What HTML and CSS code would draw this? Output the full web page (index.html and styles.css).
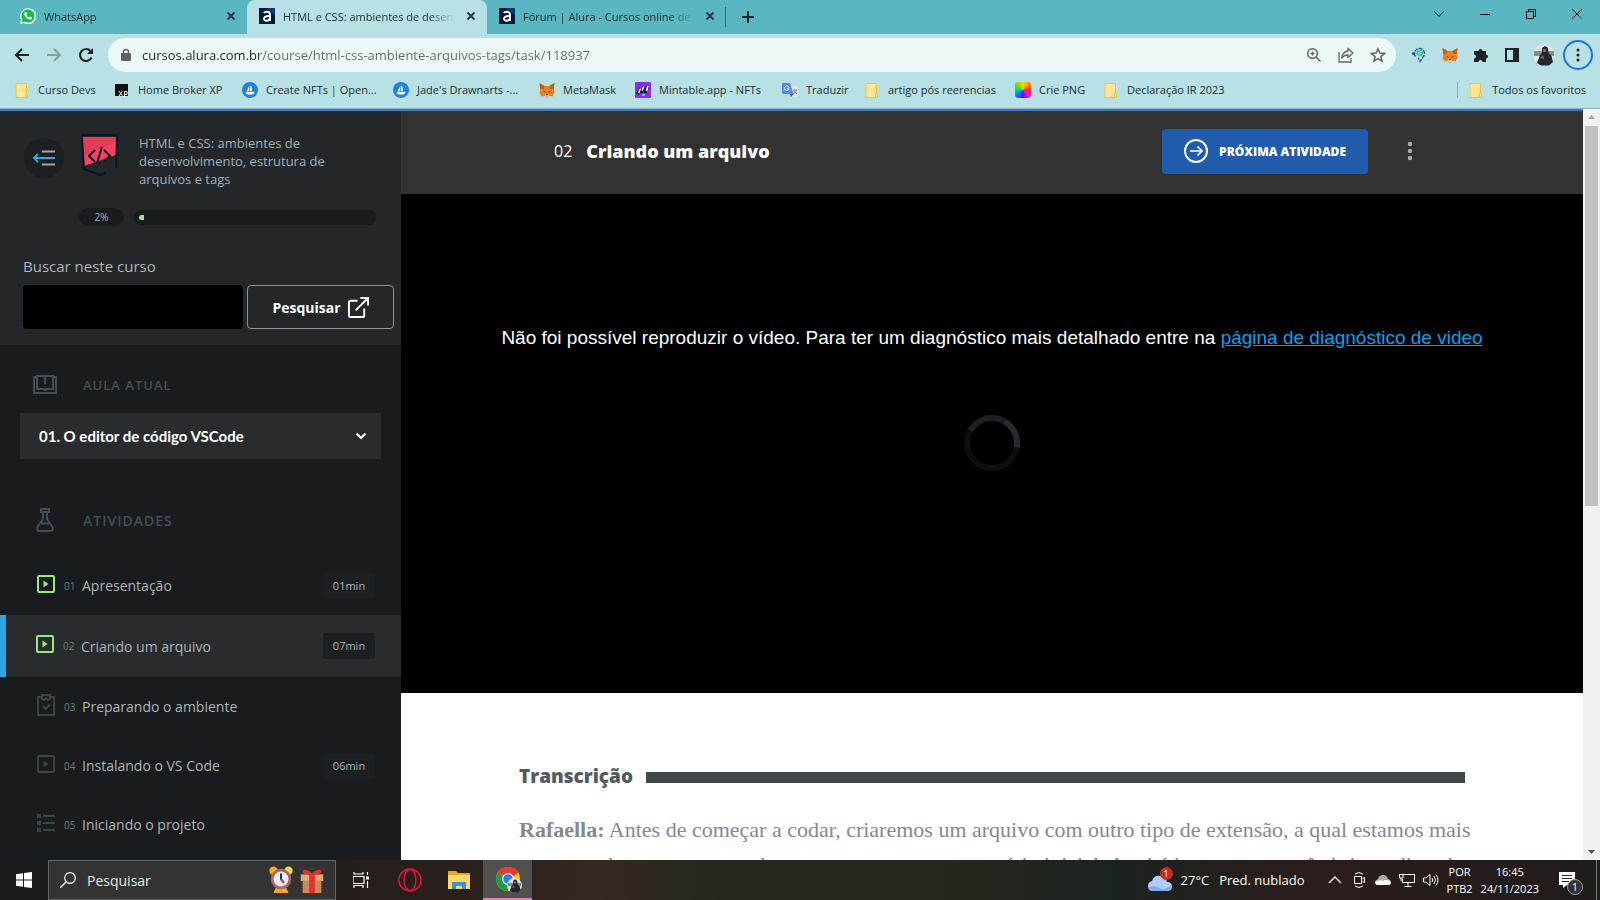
FILE: index.html
```html
<!DOCTYPE html>
<html lang="pt-BR">
<head>
<meta charset="utf-8">
<title>HTML e CSS: ambientes de desenvolvimento</title>
<link rel="stylesheet" href="styles.css">
</head>
<body>
<svg class="sprite" aria-hidden="true">
  <symbol id="close" viewBox="0 0 16 16"><path d="M4.500 4.500l7 7M11.500 4.500l-7 7" fill="none" stroke="currentColor" stroke-width="1.800"/></symbol>
  <symbol id="alura" viewBox="0 0 16 16"><path d="M0 0h16v16H0z" fill="#051933"/><path d="M7 0h9v7z" fill="#0b3b78"/><path d="M5 5.200c.8-2 6-2.200 6 1.300V13M11 8.200C7 7.800 5 8.800 5 10.700c0 2.800 5.500 2.600 6-.5" fill="none" stroke="#fff" stroke-width="2"/></symbol>
  <symbol id="folder" viewBox="0 0 16 16"><path d="M2 1.500h10.500V11l1 .5v4H2z" fill="#ffe694" stroke="#f0c443"/><path d="M11.500 15v-4h2" fill="none" stroke="#f0c443"/></symbol>
  <symbol id="sea" viewBox="0 0 16 16"><circle cx="8" cy="8" r="8" fill="#2081e2"/><path d="M7.200 4v5H4.800zM8 3.500c1.700 1.400 2.400 3 1.600 5.500H8zM3.500 9.800h9c0 1.800-1.300 2.700-2.600 2.700H6.200c-1.700 0-2.700-1.200-2.700-2.700z" fill="#fff"/></symbol>
  <symbol id="fox" viewBox="0 0 16 16"><path d="M.5 1l5 3h5l5-3-.8 6 .8 4-2 3.500-3-.8L9 15.500H7l-1.500-1.800-3 .8-2-3.500.8-4z" fill="#e8821e"/><path d="M.5 1l5 3-.8 3-3.400.2zM15.500 1l-5 3 .8 3 3.400.2z" fill="#c0601c"/><path d="M5.500 13.500L7 12.200h2l1.500 1.300L9 15.500H7z" fill="#d8c8b8"/><path d="M4.500 9l2 .8-.3 1.200zM11.500 9l-2 .8.3 1.200zM7 12.300h2v1H7z" fill="#233447"/></symbol>
  <symbol id="play" viewBox="0 0 18 18"><rect x="1" y="1" width="16" height="16" rx="1" fill="none" stroke="currentColor" stroke-width="2"/><path d="M6.500 5.500v7l5-3.500z" fill="currentColor"/></symbol>
  <symbol id="person" viewBox="0 0 22 22"><circle cx="11" cy="11" r="11" fill="#dce5e8"/><path d="M1 7h20v5H1z" fill="#7c9480"/><path d="M4 19l3-8 2-2V4l3-2 3 2 .5 5 3 3 1.500 6-4 3.500H8z" fill="#25252d"/><path d="M10 5h3v3h-3zM7 14l3-3 1 4z" fill="#85685e"/></symbol>
</svg>

<header class="browser">
  <div class="tabs">
    <div class="tab">
      <svg class="i16" viewBox="0 0 16 16"><path d="M0 16l1.200-4A8 8 0 1 1 4 15z" fill="#fff"/><path d="M1.500 14.500l.9-3A6.600 6.600 0 1 1 4.700 13.700z" fill="#1bbb4b"/><path d="M5 4.200l1.200-.2.900 2-.8 1c.7 1.200 1.400 1.900 2.700 2.500l.9-1 2 1c0 1.500-1.200 2.200-2.300 2C7 11 5 9 4.300 6.500c-.2-1 .1-1.800.7-2.300z" fill="#fff"/></svg>
      <span class="tab-title">WhatsApp</span>
      <button class="plain" aria-label="Fechar WhatsApp"><svg class="i16"><use href="#close"/></svg></button>
    </div>
    <div class="tab tab-active">
      <svg class="i16"><use href="#alura"/></svg>
      <span class="tab-title">HTML e CSS: ambientes de desenvolvimento</span>
      <button class="plain" aria-label="Fechar curso"><svg class="i16"><use href="#close"/></svg></button>
    </div>
    <div class="tab tab-last">
      <svg class="i16"><use href="#alura"/></svg>
      <span class="tab-title">Fórum | Alura - Cursos online de tecnologia</span>
      <button class="plain" aria-label="Fechar fórum"><svg class="i16"><use href="#close"/></svg></button>
    </div>
    <button class="plain new-tab" aria-label="Nova aba"><svg class="i16" viewBox="0 0 16 16"><path d="M8 2v12M2 8h12" stroke="#16272b" stroke-width="2"/></svg></button>
    <div class="window-buttons">
      <button class="plain" aria-label="Pesquisar abas"><svg class="i16" viewBox="0 0 16 16"><path d="M3 5l5 5.500L13 5" fill="none" stroke="#16272b"/></svg></button>
      <button class="plain" aria-label="Minimizar"><svg class="i16" viewBox="0 0 16 16"><path d="M3 8.500h10" stroke="#000"/></svg></button>
      <button class="plain" aria-label="Restaurar"><svg class="i16" viewBox="0 0 16 16"><path d="M3.500 5.500h7v7h-7zM5.500 5V3.500h7v7H11" fill="none" stroke="#000"/></svg></button>
      <button class="plain" aria-label="Fechar"><svg class="i16" viewBox="0 0 16 16"><path d="M3 3l10 10M13 3L3 13" stroke="#000"/></svg></button>
    </div>
  </div>
  <div class="toolbar">
    <div class="history">
      <button class="plain" aria-label="Voltar"><svg class="i16" viewBox="0 0 16 16"><path d="M15 8H2M8 2L2 8l6 6" fill="none" stroke="#202124" stroke-width="2"/></svg></button>
      <button class="plain" aria-label="Avançar"><svg class="i16" viewBox="0 0 16 16"><path d="M1 8h13M8 2l6 6-6 6" fill="none" stroke="#85a0a3" stroke-width="2"/></svg></button>
      <button class="plain" aria-label="Recarregar"><svg class="i16" viewBox="0 0 16 16"><path d="M13.500 10.500A6 6 0 1 1 12.500 4" fill="none" stroke="#202124" stroke-width="2.200"/><path d="M15 1v6H9z" fill="#202124"/></svg></button>
    </div>
    <div class="omnibox">
      <svg class="lock" viewBox="0 0 12 14"><path d="M2 5h8a1 1 0 0 1 1 1v6a1 1 0 0 1-1 1H2a1 1 0 0 1-1-1V6a1 1 0 0 1 1-1z" fill="#5f6368"/><path d="M3.500 5.500V4a2.500 2.500 0 0 1 5 0v1.500" fill="none" stroke="#5f6368" stroke-width="1.400"/></svg>
      <input class="url" type="text" aria-label="Endereço" value="cursos.alura.com.br/course/html-css-ambiente-arquivos-tags/task/118937">
      <button class="plain" aria-label="Zoom"><svg class="i16" viewBox="0 0 16 16"><circle cx="6.500" cy="6.500" r="4.800" fill="none" stroke="#5f6368" stroke-width="1.500"/><path d="M10 10l4.500 4.500M4.500 6.500h4M6.500 4.500v4" stroke="#5f6368" stroke-width="1.500"/></svg></button>
      <button class="plain" aria-label="Compartilhar"><svg class="i16" viewBox="0 0 16 16"><path d="M1 5v10h12v-4" fill="none" stroke="#5f6368" stroke-width="1.300"/><path d="M10 1.500L15 6l-5 4.500V8C7 8 5 9 3.500 11.500 4 7 6.500 4.500 10 4z" fill="none" stroke="#5f6368" stroke-width="1.300"/></svg></button>
      <button class="plain" aria-label="Favoritar"><svg class="i16" viewBox="0 0 16 16"><path d="M8 1.800l1.800 4.300 4.700.4-3.600 3.100 1.100 4.600L8 11.700l-4 2.500 1.100-4.600L1.500 6.500l4.700-.4z" fill="none" stroke="#5f6368" stroke-width="1.500"/></svg></button>
    </div>
    <div class="extensions">
      <button class="plain" aria-label="Extensão"><svg class="i16" viewBox="0 0 16 16"><path d="M4.500 9.500A5 5 0 1 1 12 10L9 14.500l-2-4" fill="none" stroke="#1d50a2" stroke-width="1.300" stroke-dasharray="4 1"/><path d="M1 6.500h3M2.500 5v3" stroke="#1d50a2" stroke-width="1.500"/><circle cx="8.800" cy="6" r="3.300" fill="#23ce83"/><path d="M7 6l3.500-2M7.500 8l3-1.500" stroke="#e5fff2"/></svg></button>
      <button class="plain" aria-label="MetaMask"><svg class="i16"><use href="#fox"/></svg></button>
      <button class="plain" aria-label="Extensões"><svg class="i16" viewBox="0 0 16 16"><path d="M1 4h4.500a2 2 0 1 1 4 0H13v3.500a2 2 0 1 1 0 4V15H9.500a2 2 0 0 0-4 0H1v-3.500a2 2 0 0 0 0-4z" fill="#202124"/></svg></button>
      <button class="plain" aria-label="Painel lateral"><svg class="i16" viewBox="0 0 16 16"><path d="M1 1h14v14H1zM3 3v10h6V3z" fill="#202124" fill-rule="evenodd"/></svg></button>
      <button class="plain" aria-label="Perfil"><svg class="i22"><use href="#person"/></svg></button>
      <button class="plain menu" aria-label="Menu"><svg class="i16" viewBox="0 0 16 16"><g fill="#202124"><circle cx="8" cy="3" r="1.500"/><circle cx="8" cy="8" r="1.500"/><circle cx="8" cy="13" r="1.500"/></g></svg></button>
    </div>
  </div>
  <nav class="bookmarks" aria-label="Favoritos">
    <a href="#"><svg class="i16"><use href="#folder"/></svg>Curso Devs</a>
    <a href="#"><svg class="i16" viewBox="0 0 16 16"><path d="M1 2h13v12H1z" fill="#111"/><path d="M5 9l3.500 5M8.500 9L5 14M10.500 15V9.500H13v3h-2.500" fill="none" stroke="#fff"/></svg>Home Broker XP</a>
    <a href="#"><svg class="i16"><use href="#sea"/></svg>Create NFTs | Open...</a>
    <a href="#"><svg class="i16"><use href="#sea"/></svg>Jade's Drawnarts -...</a>
    <a href="#"><svg class="i16"><use href="#fox"/></svg>MetaMask</a>
    <a href="#"><svg class="i16" viewBox="0 0 16 16"><rect width="16" height="16" rx="1" fill="#8a2df0"/><path d="M2.500 12l3-6M6 11l3.500-7M10 11l3-7" stroke="#120c30" stroke-width="3"/><path d="M3.500 11l2-4.500M7 8.500l2-4M11.500 9l1.500-5" stroke="#fff" stroke-width="1.600"/><path d="M7 12h3v2H7z" fill="#29d9e8"/></svg>Mintable.app - NFTs</a>
    <a href="#"><svg class="i16" viewBox="0 0 16 16"><path d="M6 4h10v11H9z" fill="#dfe3e7"/><path d="M0 1h8l3.500 11H1l-1-1z" fill="#5389e8"/><path d="M8 12h3.500L9 15z" fill="#2855b5"/><path d="M7 5.500A2.300 2.300 0 1 0 7 7H5" fill="none" stroke="#fff"/><path d="M11 8h4M14 8c0 2-1 3-3 4M12 9l3 3" stroke="#7a8790" fill="none"/></svg>Traduzir</a>
    <a href="#"><svg class="i16"><use href="#folder"/></svg>artigo pós reerencias</a>
    <a href="#"><span class="wheel"></span>Crie PNG</a>
    <a href="#"><svg class="i16"><use href="#folder"/></svg>Declaração IR 2023</a>
    <a href="#" class="all"><svg class="i16"><use href="#folder"/></svg>Todos os favoritos</a>
  </nav>
</header>

<div class="page">
  <div class="viewport">
    <aside class="sidebar">
      <div class="course">
        <div class="course-head">
          <button class="toggle" aria-label="Recolher menu"><svg viewBox="0 0 24 18"><path d="M10 2.500h13M10 15.500h13" stroke="#a5a7a8" stroke-width="2"/><path d="M23 9H2M6 5L2 9l4 4" fill="none" stroke="#2ea6e6" stroke-width="2"/></svg></button>
          <svg class="course-logo" viewBox="0 0 38 42"><path d="M2 3h33v18L3 32z" fill="#ff4161"/><path d="M2 3h33v5L2 22z" fill="#e33b58"/><path d="M1 3q0-2 2-2h31q2 0 2 2l-1 31M1 4l2 31 16 6 5-2" fill="none" stroke="#03152a" stroke-width="2"/><path d="M14 16l-6 6 6 6M21 13l-5 16M23 16l6 6-6 5" fill="none" stroke="#03152a" stroke-width="2"/></svg>
          <h2 class="course-name">HTML e CSS: ambientes de desenvolvimento, estrutura de arquivos e tags</h2>
        </div>
        <div class="progress"><span class="percent">2%</span><div class="track"><div class="fill" style="width:2%"></div></div></div>
        <form class="search">
          <label for="q">Buscar neste curso</label>
          <div class="search-row">
            <input id="q" type="text">
            <button type="button">Pesquisar <svg viewBox="0 0 22 22"><path d="M10 4H3q-2 0-2 2v13q0 2 2 2h12q2 0 2-2v-7M13 1h8v8M21 1L8 14" fill="none" stroke="#fff" stroke-width="2"/></svg></button>
          </div>
        </form>
      </div>
      <div class="section-head"><svg class="section-icon" viewBox="0 0 24 24"><path d="M4 4H1v16h22V4h-3" fill="none" stroke="currentColor" stroke-width="2"/><path d="M4 3h7l1 1 1-1h7v13h-7l-1 1-1-1H4zM12 4v7" fill="none" stroke="currentColor" stroke-width="2"/></svg><label for="lesson">AULA ATUAL</label></div>
      <div class="lesson">
        <select id="lesson"><option>01. O editor de código VSCode</option></select>
        <svg class="lesson-arrow" viewBox="0 0 12 8"><path d="M1.500 1.500L6 6l4.500-4.500" fill="none" stroke="#fff" stroke-width="2.200"/></svg>
      </div>
      <div class="section-head activities-head"><svg class="section-icon" viewBox="0 0 24 24"><path d="M8 1h8v3H8zM10 4v7l-5.500 8q-1 4 2 4h11q3 0 2-4L14 11V4M8 15.500h8" fill="none" stroke="currentColor" stroke-width="2"/></svg><h3>ATIVIDADES</h3></div>
      <ul class="activities">
        <li><a href="#" class="activity done"><svg class="i18"><use href="#play"/></svg><span class="num">01</span><span class="name">Apresentação</span><span class="time">01min</span></a></li>
        <li><a href="#" class="activity done current"><svg class="i18"><use href="#play"/></svg><span class="num">02</span><span class="name">Criando um arquivo</span><span class="time">07min</span></a></li>
        <li><a href="#" class="activity"><svg class="clipboard" viewBox="0 0 18 22"><path d="M5 3H1v18h16V3h-4" fill="none" stroke="currentColor" stroke-width="2"/><path d="M5 1h8v4l-2 1-2-2-2 2-2-1z" fill="none" stroke="currentColor" stroke-width="2"/><path d="M5.500 12l3 3 4.500-4.500" fill="none" stroke="currentColor" stroke-width="2.200"/></svg><span class="num">03</span><span class="name">Preparando o ambiente</span></a></li>
        <li><a href="#" class="activity"><svg class="i18"><use href="#play"/></svg><span class="num">04</span><span class="name">Instalando o VS Code</span><span class="time">06min</span></a></li>
        <li><a href="#" class="activity"><svg class="i18" viewBox="0 0 18 18"><path d="M0 0h4v4H0zM0 7h4v4H0zM0 14h4v4H0zM6 1h12v2H6zM6 8h12v2H6zM6 15h12v2H6z" fill="currentColor"/></svg><span class="num">05</span><span class="name">Iniciando o projeto</span></a></li>
      </ul>
    </aside>
    <main class="content">
      <div class="task-head">
        <h1><span class="task-num">02</span>Criando um arquivo</h1>
        <div class="task-actions">
          <a href="#" class="next"><svg viewBox="0 0 24 24"><circle cx="12" cy="12" r="11" fill="none" stroke="#fff" stroke-width="2"/><path d="M6 12h12M13.500 7.500L18 12l-4.500 4.500" fill="none" stroke="#fff" stroke-width="1.700"/></svg>PRÓXIMA ATIVIDADE</a>
          <button class="plain" aria-label="Mais opções"><svg class="more" viewBox="0 0 6 20"><g fill="#9fb3bd"><circle cx="3" cy="3" r="2.200"/><circle cx="3" cy="10" r="2.200"/><circle cx="3" cy="17" r="2.200"/></g></svg></button>
        </div>
      </div>
      <div class="video">
        <p>Não foi possível reproduzir o vídeo. Para ter um diagnóstico mais detalhado entre na <a href="#">página de diagnóstico de video</a></p>
        <svg class="spinner" viewBox="0 0 56 56"><g fill="none" stroke-width="6"><circle cx="28" cy="28" r="25" stroke="#0c0e10"/><path d="M6.300 15.500A25 25 0 0 1 40.500 6.300" stroke="#1b2025"/><path d="M40.500 6.300A25 25 0 0 1 52.600 32.300" stroke="#262b31"/></g></svg>
      </div>
      <article class="transcript">
        <h2>Transcrição</h2>
        <p><strong>Rafaella:</strong> Antes de começar a codar, criaremos um arquivo com outro tipo de extensão, a qual estamos mais acostumados no momento de programar, mas neste cenário inicial. Aqui é importante você abrir o editor de texto</p>
      </article>
    </main>
  </div>
  <div class="scrollbar" aria-hidden="true"><svg viewBox="0 0 17 17"><path d="M5 10l3.500-4 3.500 4z" fill="#a3a3a3"/></svg><div class="scroll-track"><div class="thumb"></div></div><svg viewBox="0 0 17 17"><path d="M5 7l3.500 4L12 7z" fill="#505050"/></svg></div>
</div>

<footer class="taskbar">
  <button class="plain start" aria-label="Iniciar"><svg class="i16" viewBox="0 0 16 16"><path d="M0 2.200l7-1V7.500H0zM8 1.100L16 0v7.500H8zM0 8.500h7v6.300l-7-1zM8 8.500h8V16l-8-1.100z" fill="#fff"/></svg></button>
  <div class="task-search">
    <svg class="i16" viewBox="0 0 16 16"><circle cx="10" cy="6" r="5.300" fill="none" stroke="#fff" stroke-width="1.200"/><path d="M6 10L0 16" stroke="#fff" stroke-width="1.300"/></svg>
    <input type="text" placeholder="Pesquisar" aria-label="Pesquisar no Windows">
    <svg class="i28" viewBox="0 0 28 30"><path d="M6 29l3-7h10l3 7z" fill="#f5a72c"/><circle cx="6" cy="5" r="4.500" fill="#f1a72c"/><circle cx="22" cy="5" r="4.500" fill="#fbd43b"/><circle cx="14" cy="14" r="11" fill="#a8675f"/><circle cx="14" cy="14" r="8" fill="#ece9fb"/><path d="M14 8v6l3 4" fill="none" stroke="#1f1a55" stroke-width="2"/><path d="M14 14l3 4" stroke="#e33" stroke-width="2"/></svg>
    <svg class="i28" viewBox="0 0 28 30"><path d="M2 9h24v7H2z" fill="#e8aa7c"/><path d="M4 16h20v13H4z" fill="#cf875c"/><path d="M11 8h6v21h-6z" fill="#e4302b"/><path d="M14 9C9 10 4 9 4 6s5-3 10 2c5-5 10-5 10-2s-5 4-10 3z" fill="#e4302b"/></svg>
  </div>
  <button class="plain app" aria-label="Visão de tarefas"><svg class="i16" viewBox="0 0 16 16"><path d="M0 4.500h11v7H0zM1 0v2h9V0M1 16v-2.500h9V16M14.500 0v3M14.500 9v7" fill="none" stroke="#fff" stroke-width="1.200"/><path d="M13 4.500h3v3h-3z" fill="#fff"/></svg></button>
  <button class="plain app" aria-label="Opera"><svg class="i24" viewBox="0 0 24 24"><g fill="none" stroke="#e11545" stroke-width="1.500"><circle cx="12" cy="12" r="11"/><ellipse cx="12" cy="12" rx="6" ry="10.500"/></g></svg></button>
  <button class="plain app" aria-label="Explorador de Arquivos"><svg class="i24" viewBox="0 0 24 24"><path d="M1 3h8l2 2h12v16H1z" fill="#e9a91e"/><path d="M1 7h22v14H1z" fill="#ffd865"/><path d="M5 14h14v7h-4v-3H9v3H5z" fill="#3a91d6"/></svg></button>
  <button class="plain app app-active" aria-label="Google Chrome"><svg class="i28" viewBox="0 0 28 28"><circle cx="14" cy="14" r="12" fill="#fbc116"/><path d="M14 14L3.600 8A12 12 0 0 1 24.400 8z" fill="#e33b2e"/><path d="M14 14L3.600 8A12 12 0 0 0 14 26z" fill="#229a49"/><circle cx="14" cy="14" r="6" fill="#fff"/><circle cx="14" cy="14" r="4.800" fill="#2d7cf0"/><svg x="13" y="13" width="15" height="15"><use href="#person"/></svg></svg></button>
  <div class="tray">
    <div class="weather"><svg viewBox="0 0 26 26"><path d="M6 24q-5 0-5-5 0-4 4-5 2-6 8-5t7 6q5 0 5 4.500T20 24z" fill="#b1cdf7"/><path d="M2 20q7-2 10 1t12-2q0 5-5 5H6q-4 0-4-4z" fill="#7eaaf0"/></svg><span class="weather-count">1</span></div>
    <span class="forecast">27°C<span>Pred. nublado</span></span>
    <svg class="i16" viewBox="0 0 16 16"><path d="M2 11l6-6 6 6" fill="none" stroke="#fff" stroke-width="1.300"/></svg>
    <svg class="i16" viewBox="0 0 16 16"><path d="M3.500 4.500h7v7h-7zM10.500 7l3-1.500v5l-3-1.500M4 2q4-3 8 0M4 14q4 3 8 0" fill="none" stroke="#fff"/></svg>
    <svg class="i16" viewBox="0 0 16 16"><path d="M3 13q-3 0-3-3 0-2 3-3 1-4 5-4t5 4q3 1 3 3.500T13 13z" fill="#a8a8a8"/><path d="M2 13q-2-1-2-3 5-3 8-1 3-2 7 0 2 4-2 4z" fill="#fff"/></svg>
    <svg class="i16" viewBox="0 0 16 16"><path d="M4 2.500h11.500v8H3.500V7M0.500 2.500H4V6H.5zM2 6v3M9 10.500v4M5.500 14.500h7" fill="none" stroke="#fff"/></svg>
    <svg class="i16" viewBox="0 0 16 16"><path d="M.5 6v4H3l4 3.500v-11L3 6zM9 6q1.500 2 0 4M11 4q3 4 0 8M13 2.500q4 5.500 0 11" fill="none" stroke="#fff"/></svg>
    <div class="tray-text">POR<br>PTB2</div>
    <time class="tray-text">16:45<br>24/11/2023</time>
    <div class="notice"><svg class="i16" viewBox="0 0 16 16"><path d="M0 0h16v13H8l-4 3v-3H0z" fill="#fff"/><path d="M3 3.500h10M3 6.500h10M3 9.500h7" stroke="#222"/></svg><span class="notice-count">1</span></div>
  </div>
</footer>
</body>
</html>
```
FILE: styles.css
```css
* { box-sizing: border-box; }
body { margin: 0; height: 100vh; display: flex; flex-direction: column; overflow: hidden; font-family: "Open Sans", "Noto Sans", sans-serif; }
h1, h2, h3, p, ul { margin: 0; padding: 0; }
a { color: inherit; text-decoration: none; }
svg { flex: none; display: block; }
input, select, button { font-family: inherit; }
.sprite { position: absolute; width: 0; height: 0; }
.plain { display: flex; align-items: center; justify-content: center; padding: 0; border: 0; background: none; color: #26363a; }
.i16 { width: 16px; height: 16px; }
.i18 { width: 18px; height: 18px; }
.i22 { width: 22px; height: 22px; }
.i24 { width: 24px; height: 24px; }
.i28 { width: 28px; height: 28px; }

.browser { flex: none; background: #b7e1e4; border-bottom: 1px solid #93aeb1; color: #1c2c30; font-size: 11px; }
.tabs { display: flex; height: 34px; background: #5ab7c1; }
.tab { display: flex; align-items: center; gap: 8px; width: 240px; padding: 0 8px 2px 12px; }
.tab:first-child { width: 247px; padding-left: 20px; border-radius: 0 0 8px 0; }
.tab-active { background: #b7e1e4; border-radius: 8px 8px 0 0; }
.tab-last { position: relative; width: 239px; }
.tab-last::after { content: ""; position: absolute; right: 0; top: 7px; height: 20px; width: 1px; background: #3a6a70; }
.tab-title { flex: 1; overflow: hidden; white-space: nowrap; mask-image: linear-gradient(90deg, #000 85%, transparent); }
.new-tab { width: 44px; }
.window-buttons { display: flex; margin-left: auto; height: 28px; }
.window-buttons .plain { width: 46px; }
.toolbar { display: flex; align-items: center; height: 42px; padding: 0 7px 0 14px; }
.history { display: flex; gap: 16px; width: 94px; }
.omnibox { flex: 1; display: flex; align-items: center; height: 34px; padding: 0 10px 0 12px; border-radius: 17px; background: #ecf8f8; gap: 16px; }
.lock { width: 12px; height: 14px; margin-right: -6px; }
.url { flex: 1; min-width: 0; padding: 0; border: 0; font-size: 13px; color: transparent; background: linear-gradient(90deg, #202124 117px, #62696d 117px); background-clip: text; }
.extensions { display: flex; align-items: center; gap: 15px; padding-left: 15px; }
.extensions .i22 { margin: 0 -2px; }
.menu { width: 30px; height: 30px; margin-left: -5px; border: 2px solid #1a73e8; border-radius: 50%; }
.bookmarks { display: grid; grid-template-columns: 100px 128px 151px 146px 96px 147px 82px 151px 88px 1fr auto; align-items: center; height: 32px; padding: 0 14px 5px; white-space: nowrap; }
.bookmarks a { display: flex; align-items: center; gap: 8px; }
.bookmarks .all { padding-left: 10px; border-left: 1px solid #8fb0b4; }
.wheel { width: 16px; height: 16px; border-radius: 3px; background: conic-gradient(#ffd800, #ff8a00, #ff2525, #e01bd0, #6a00ff, #1476ff, #10d080, #7be000, #ffd800); }

.page { flex: 1; min-height: 0; display: flex; }
.viewport { flex: 1; min-width: 0; display: flex; border-top: 2px solid #2b7de1; overflow: hidden; }
.sidebar { flex: none; width: 401px; background: #181c1f; color: #b0b3b5; }
.course { height: 234px; padding: 23px 7px 0 23px; background: #232729; }
.course-head { display: flex; align-items: flex-start; }
.toggle { display: flex; align-items: center; justify-content: center; width: 40px; height: 40px; margin: 4px 17px 0 1px; padding: 0; border: 0; border-radius: 50%; background: #1b1f21; }
.toggle svg { width: 24px; height: 18px; }
.course-logo { width: 38px; height: 42px; margin-right: 20px; }
.course-name { width: 200px; font-size: 13px; font-weight: 400; line-height: 18px; color: #9fb1ba; }
.progress { display: flex; align-items: center; gap: 10px; margin-top: 20px; padding: 0 18px 0 56px; }
.percent { width: 45px; border-radius: 9px; background: #181c1f; font-size: 10px; line-height: 18px; text-align: center; color: #9fb1ba; }
.track { flex: 1; height: 15px; padding: 5px; border-radius: 8px; background: #181c1f; }
.fill { height: 5px; border-radius: 3px 0 0 3px; background: #9be77e; }
.search { margin-top: 30px; font-size: 15px; }
.search label { display: block; line-height: 20px; }
.search-row { display: flex; gap: 4px; margin-top: 9px; height: 44px; }
.search-row input { flex: 1; min-width: 0; border: 0; border-radius: 4px; background: #000; color: #fff; }
.search-row button { display: flex; align-items: center; justify-content: center; gap: 7px; width: 147px; border: 1px solid #909395; border-radius: 4px; background: none; color: #fff; font-size: 14px; font-weight: 700; }
.search-row svg { width: 21px; height: 21px; }
.section-head { display: flex; align-items: center; gap: 26px; height: 68px; padding: 12px 33px 0; color: #434d53; }
.section-head label, .section-head h3 { font-size: 13px; font-weight: 600; letter-spacing: 1px; }
.section-icon { width: 24px; height: 24px; }
.lesson { position: relative; margin: 0 20px; }
.lesson select { width: 100%; height: 46px; padding: 0 19px; appearance: none; border: 0; border-radius: 0; background: #282c2f; color: #fff; font: 700 15px Lato, sans-serif; }
.lesson-arrow { position: absolute; right: 14px; top: 19px; width: 12px; height: 8px; }
.activities-head { height: 97px; padding-top: 25px; }
.activities-head h3 { font-size: 14px; }
.activities { list-style: none; }
.activity { display: flex; align-items: center; height: 59px; padding: 0 26px 0 37px; font-size: 14px; color: #3a4348; }
.activity svg { margin-bottom: 4px; }
.clipboard { width: 18px; height: 22px; }
.current { height: 62px; padding-left: 30px; border-left: 6px solid #2ea6e6; background: #282c2f; }
.done { color: #9be77e; }
.num { width: 18px; margin-left: 9px; font-size: 10px; color: #72787b; }
.name { flex: 1; color: #b0b3b5; }
.time { width: 52px; border-radius: 3px; background: #1b1f21; font-size: 11px; line-height: 26px; text-align: center; color: #b0b3b5; }

.content { flex: 1; min-width: 0; background: #fff; }
.task-head { display: flex; align-items: center; justify-content: space-between; height: 83px; padding: 0 170px 3px 153px; background: #323232; color: #fff; }
.task-head h1 { display: flex; align-items: center; gap: 14px; font-size: 18px; font-weight: 800; }
.task-num { font-size: 16px; font-weight: 400; }
.task-actions { display: flex; align-items: center; gap: 39px; }
.next { display: flex; align-items: center; gap: 11px; height: 45px; padding: 0 22px; border-radius: 4px; background: #205bac; font-size: 12px; font-weight: 800; }
.next svg { width: 24px; height: 24px; }
.more { width: 6px; height: 20px; }
.video { display: flex; flex-direction: column; align-items: center; height: 499px; padding-top: 132px; background: #000; color: #fff; font-family: "Liberation Sans", Arial, sans-serif; font-size: 19px; line-height: 24px; }
.video p { white-space: nowrap; }
.video a { color: #0a9ff0; text-decoration: underline; }
.spinner { width: 56px; height: 56px; margin-top: 65px; }
.transcript { padding: 68px 110px 0 118px; }
.transcript h2 { display: flex; align-items: center; gap: 13px; margin-right: 8px; font-size: 19px; line-height: 30px; font-weight: 800; color: #525b61; }
.transcript h2::after { content: ""; flex: 1; height: 11px; margin-top: 2px; background: #43474a; }
.transcript p { margin-top: 21px; font-family: "Source Serif Pro", "Liberation Serif", "Times New Roman", serif; font-size: 22px; line-height: 35px; color: #83898d; }
.scrollbar { width: 17px; display: flex; flex-direction: column; background: #f1f1f1; }
.scrollbar svg { width: 17px; height: 17px; }
.scroll-track { flex: 1; padding: 0 2px; }
.thumb { height: 53%; background: #c1c1c1; }

.taskbar { flex: none; display: flex; height: 40px; background: linear-gradient(90deg, #1a1c19, #281f1b 28%, #352820 37%, #25291d 45%, #25291d 57%, #1b231e 70%, #2b1d1b 82%, #201c1a); color: #fff; }
.start { width: 48px; }
.task-search { display: flex; align-items: center; gap: 3px; width: 288px; padding: 0 9px 0 11px; border: 1px solid #666; background: #333; }
.task-search input { flex: 1; min-width: 0; padding: 0 0 0 8px; border: 0; background: none; color: #fff; font-size: 14px; }
.task-search input::placeholder { color: #e6e6e6; }
.app { width: 49px; }
.app-active { background: #50514c; border-bottom: 2px solid #ef7bb0; }
.tray { display: flex; align-items: center; gap: 8px; margin-left: auto; padding-right: 3px; }
.weather { position: relative; width: 26px; height: 26px; }
.weather svg { width: 26px; height: 26px; }
.weather-count { position: absolute; right: 0; top: 0; width: 13px; height: 13px; border-radius: 50%; background: #c92b23; font-size: 9px; line-height: 13px; text-align: center; }
.forecast { display: flex; gap: 10px; margin-right: 14px; font-size: 13px; }
.tray-text { font-size: 11px; line-height: 17px; text-align: center; }
.notice { position: relative; display: flex; align-items: center; width: 38px; height: 40px; margin-left: 12px; border-right: 1px solid #777; }
.notice-count { position: absolute; left: 8px; top: 19px; width: 16px; height: 16px; border: 1px solid #999; border-radius: 50%; background: #333; font-size: 11px; line-height: 14px; text-align: center; }
```
